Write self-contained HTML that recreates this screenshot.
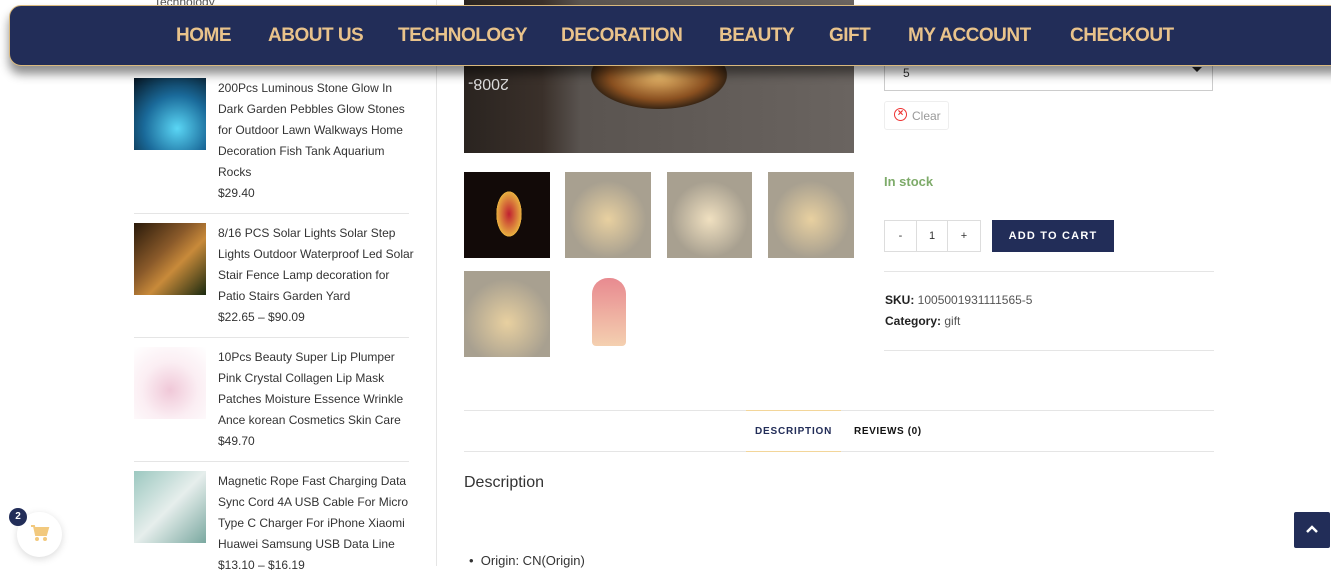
<!DOCTYPE html>
<html><head><meta charset="utf-8"><style>
*{margin:0;padding:0;box-sizing:border-box}
body{width:1331px;height:566px;overflow:hidden;background:#fff;font-family:"Liberation Sans",Arial,sans-serif;position:relative;color:#333}
.a{position:absolute}
.nav{left:9px;top:5px;width:1340px;height:61px;background:#222d58;border:1px solid #d9b97e;border-radius:12px;box-shadow:0 8px 10px rgba(0,0,0,.45);z-index:5}
.nav span{position:absolute;top:19px;color:#e9c38b;font-weight:bold;font-size:19px;letter-spacing:-.5px}
.st{font-size:12px;line-height:21px;color:#333;white-space:nowrap}
.sep{height:1px;background:#e5e5e5}
.th{position:absolute;width:86px;height:86px}
</style></head><body>
<div class="a st" style="left:154px;top:-8px;color:#555">Technology</div>
<div class="nav a">
<span style="left:166px">HOME</span><span style="left:258px">ABOUT US</span><span style="left:388px">TECHNOLOGY</span><span style="left:551px">DECORATION</span><span style="left:709px">BEAUTY</span><span style="left:819px">GIFT</span><span style="left:898px">MY ACCOUNT</span><span style="left:1060px">CHECKOUT</span>
</div>
<div class="a" style="left:134px;top:78px;width:72px;height:72px;background:radial-gradient(circle at 60% 70%,#5ad6f5,#1a6a9a 50%,#061420)"></div>
<div class="a st" style="left:218px;top:78px">200Pcs Luminous Stone Glow In<br>Dark Garden Pebbles Glow Stones<br>for Outdoor Lawn Walkways Home<br>Decoration Fish Tank Aquarium<br>Rocks<br>$29.40</div>
<div class="a sep" style="left:134px;top:213px;width:275px"></div>
<div class="a" style="left:134px;top:223px;width:72px;height:72px;background:linear-gradient(135deg,#2a1a0a,#8a5a2a 40%,#c88a3a 60%,#1a2a10)"></div>
<div class="a st" style="left:218px;top:223px">8/16 PCS Solar Lights Solar Step<br>Lights Outdoor Waterproof Led Solar<br>Stair Fence Lamp decoration for<br>Patio Stairs Garden Yard<br>$22.65 – $90.09</div>
<div class="a sep" style="left:134px;top:337px;width:275px"></div>
<div class="a" style="left:134px;top:347px;width:72px;height:72px;background:radial-gradient(circle at 50% 60%,#f0c8d8,#fbeef3 50%,#fff)"></div>
<div class="a st" style="left:218px;top:347px">10Pcs Beauty Super Lip Plumper<br>Pink Crystal Collagen Lip Mask<br>Patches Moisture Essence Wrinkle<br>Ance korean Cosmetics Skin Care<br>$49.70</div>
<div class="a sep" style="left:134px;top:461px;width:275px"></div>
<div class="a" style="left:134px;top:471px;width:72px;height:72px;background:linear-gradient(135deg,#9cc8c0,#e6eeec 50%,#7aa8a0)"></div>
<div class="a st" style="left:218px;top:471px">Magnetic Rope Fast Charging Data<br>Sync Cord 4A USB Cable For Micro<br>Type C Charger For iPhone Xiaomi<br>Huawei Samsung USB Data Line<br>$13.10 – $16.19</div>
<div class="a" style="left:436px;top:0;width:1px;height:566px;background:#e5e5e5"></div>
<div class="a" style="left:464px;top:0;width:390px;height:153px;background:radial-gradient(ellipse 90px 45px at 195px 75px,#f0c070,#8a5020 55%,#3a2614 75%,transparent 76%),linear-gradient(90deg,#2a2420 0,#3a302a 20%,#5a5450 30%,#6a6460)"></div>
<div class="a" style="left:468px;top:74px;font-size:16px;color:#ddd;transform:rotate(180deg)">2008-</div>
<div class="th" style="left:464px;top:172px;background:radial-gradient(ellipse 18px 32px at 45px 42px,#c02030,#e8b040 70%,#120a08 71%)"></div>
<div class="th" style="left:565px;top:172px;background:radial-gradient(circle at 50% 55%,#e8d0a0,#a8a090 60%)"></div>
<div class="th" style="left:667px;top:172px;width:85px;background:radial-gradient(circle at 50% 55%,#f0e0c0,#a8a090 60%)"></div>
<div class="th" style="left:768px;top:172px;background:radial-gradient(circle at 50% 55%,#e8d0a0,#a8a090 60%)"></div>
<div class="th" style="left:464px;top:271px;background:radial-gradient(circle at 50% 60%,#e8d0a0,#a8a090 65%)"></div>
<div class="a" style="left:592px;top:278px;width:34px;height:68px;border-radius:16px 16px 4px 4px;background:linear-gradient(#e88a90,#f4d0b0)"></div>
<div class="a" style="left:884px;top:52px;width:329px;height:39px;border:1px solid #ccc;border-top:none"></div>
<div class="a" style="left:903px;top:66px;font-size:12px">5</div>
<div class="a" style="left:1192px;top:67px;border:5px solid transparent;border-top:5px solid #222"></div>
<div class="a" style="left:884px;top:101px;width:65px;height:29px;border:1px solid #eee;border-radius:3px;font-size:12px;color:#999;padding:7px 0 0 27px">Clear</div>
<div class="a" style="left:894px;top:108px;width:13px;height:13px;border:1.5px solid #e33;border-radius:50%;color:#e33;font-size:10px;line-height:10px;text-align:center;font-weight:bold">×</div>
<div class="a" style="left:884px;top:174px;font-size:13px;font-weight:bold;color:#7eab6a">In stock</div>
<div class="a" style="left:884px;top:220px;width:97px;height:32px;border:1px solid #ddd;display:flex;font-size:11px">
<div style="width:32px;border-right:1px solid #ddd;text-align:center;line-height:30px">-</div><div style="width:31px;border-right:1px solid #ddd;text-align:center;line-height:30px">1</div><div style="width:32px;text-align:center;line-height:30px">+</div></div>
<div class="a" style="left:992px;top:220px;width:122px;height:32px;background:#222d58;color:#fff;font-size:11px;font-weight:bold;letter-spacing:1.2px;text-align:center;line-height:32px">ADD TO CART</div>
<div class="a sep" style="left:884px;top:271px;width:330px"></div>
<div class="a" style="left:885px;top:290px;font-size:12px;line-height:21px;color:#555"><b style="color:#222">SKU:</b> 1005001931111565-5<br><b style="color:#222">Category:</b> gift</div>
<div class="a sep" style="left:884px;top:350px;width:330px"></div>
<div class="a sep" style="left:464px;top:410px;width:750px"></div>
<div class="a sep" style="left:464px;top:451px;width:750px"></div>
<div class="a" style="left:746px;top:410px;width:95px;height:42px;border-top:1px solid #f3d69a;border-bottom:1px solid #f3d69a"></div>
<div class="a" style="left:755px;top:426px;font-size:10px;font-weight:bold;letter-spacing:.8px;color:#222d58">DESCRIPTION</div>
<div class="a" style="left:854px;top:426px;font-size:10px;font-weight:bold;letter-spacing:.6px;color:#111">REVIEWS (0)</div>
<div class="a" style="left:464px;top:474px;font-size:16px;color:#333">Description</div>
<div class="a" style="left:469px;top:553px;font-size:13px;color:#333">•&nbsp; Origin: CN(Origin)</div>
<div class="a" style="left:17px;top:512px;width:45px;height:45px;border-radius:50%;background:#fff;box-shadow:0 2px 8px rgba(0,0,0,.15)"></div>
<svg class="a" style="left:30px;top:524px" width="20" height="18" viewBox="0 0 20 18"><path d="M1 2h3l2 9h10l2-7H5" fill="#f2c97e" stroke="#f2c97e" stroke-width="2"/><circle cx="7" cy="15" r="2" fill="#f2c97e"/><circle cx="15" cy="15" r="2" fill="#f2c97e"/></svg>
<div class="a" style="left:9px;top:508px;width:18px;height:18px;border-radius:50%;background:#222d58;color:#fff;font-size:10px;font-weight:bold;text-align:center;line-height:18px">2</div>
<div class="a" style="left:1294px;top:512px;width:36px;height:36px;background:#222d58;border-radius:2px"></div>
<svg class="a" style="left:1305px;top:524px" width="14" height="10"><path d="M2 8l5-5 5 5" stroke="#fff" stroke-width="2.5" fill="none"/></svg>
</body></html>
